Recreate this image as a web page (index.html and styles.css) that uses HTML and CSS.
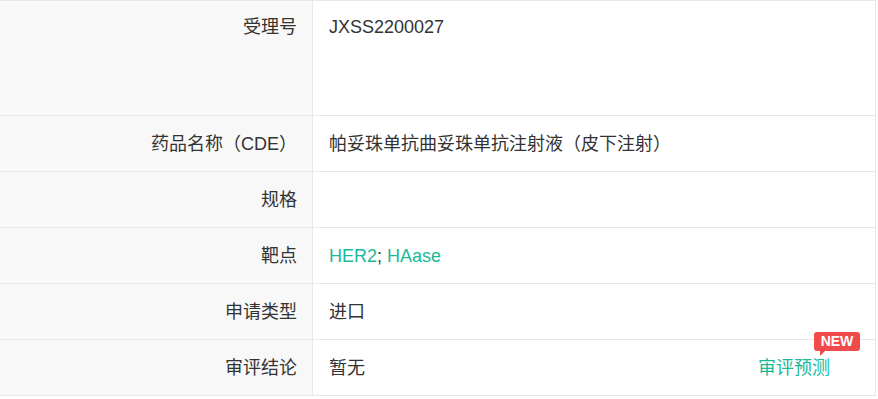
FILE: index.html
```html
<!DOCTYPE html>
<html lang="zh">
<head>
<meta charset="utf-8">
<link rel="stylesheet" href="styles.css">
</head>
<body>
<div class="table">
  <div class="row row-tall">
    <div class="label">受理号</div>
    <div class="value">JXSS2200027</div>
  </div>
  <div class="row">
    <div class="label">药品名称（CDE）</div>
    <div class="value">帕妥珠单抗曲妥珠单抗注射液（皮下注射）</div>
  </div>
  <div class="row">
    <div class="label">规格</div>
    <div class="value"></div>
  </div>
  <div class="row">
    <div class="label">靶点</div>
    <div class="value"><span><span class="link">HER2</span>; <span class="link">HAase</span></span></div>
  </div>
  <div class="row">
    <div class="label">申请类型</div>
    <div class="value">进口</div>
  </div>
  <div class="row">
    <div class="label">审评结论</div>
    <div class="value split">
      <span>暂无</span>
      <span class="predict">审评预测<span class="badge">NEW</span></span>
    </div>
  </div>
</div>
</body>
</html>
```

FILE: styles.css
```css
html, body {
  margin: 0;
  padding: 0;
  background: #fff;
}
body {
  font-family: "Liberation Sans", "Noto Sans CJK SC", sans-serif;
  font-size: 18px;
  color: #333;
}
.table {
  width: 875px;
  border-top: 1px solid #e8e8e8;
  border-right: 1px solid #e8e8e8;
}
.row {
  display: grid;
  grid-template-columns: 313px 1fr;
  height: 55px;
  border-bottom: 1px solid #e8e8e8;
}
.row-tall {
  height: 114px;
}
.label, .value {
  display: flex;
  align-items: center;
  line-height: 24px;
}
.label {
  background: #f8f8f8;
  border-right: 1px solid #e8e8e8;
  justify-content: flex-end;
  padding-right: 15px;
}
.value {
  padding-left: 16px;
}
.row-tall .label, .row-tall .value {
  align-items: flex-start;
  padding-top: 14px;
}
.link {
  color: #1cb89a;
}
.split {
  justify-content: space-between;
  padding-right: 45px;
}
.predict {
  position: relative;
  color: #1cb89a;
}
.badge {
  position: absolute;
  left: 56px;
  top: -24px;
  width: 46px;
  height: 19px;
  background: #f04a4a;
  color: #fff;
  border-radius: 3px;
  font-family: "Liberation Sans", sans-serif;
  font-weight: bold;
  font-size: 14px;
  line-height: 19px;
  text-align: center;
}
.badge::after {
  content: "";
  position: absolute;
  left: 6px;
  top: 19px;
  border-left: 5px solid #f04a4a;
  border-right: 0 solid transparent;
  border-bottom: 5px solid transparent;
}
```
